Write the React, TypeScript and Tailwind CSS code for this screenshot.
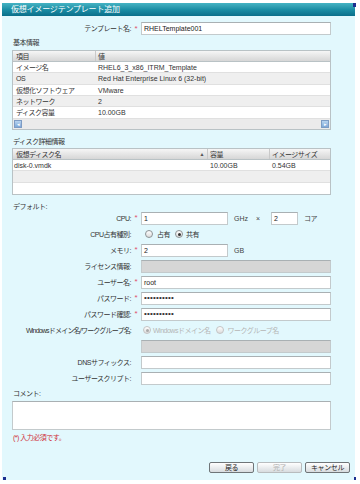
import React from "react";

const FONT = { fontFamily: '"Liberation Sans", "Noto Sans CJK JP", sans-serif' };

function Input({ value, w = "w-[190px]", disabled = false, pwd = false }: { value?: string; w?: string; disabled?: boolean; pwd?: boolean }) {
  return (
    <div
      className={`${w} h-[13px] border border-[#c3cacc] border-t-[#a9b0b3] ${disabled ? "bg-[#d6d6d6]" : "bg-white"} flex items-center pl-[2px] text-[7px] tracking-[0px] text-[#222] leading-none`}
    >
      {pwd ? <span className="text-[8px] tracking-[0.2px] text-[#333]">••••••••••</span> : value}
    </div>
  );
}

function Radio({ checked = false, disabled = false }: { checked?: boolean; disabled?: boolean }) {
  return (
    <span
      className={`w-[8px] h-[8px] rounded-full border ${disabled ? "border-[#c4c4c4]" : "border-[#8c9396]"} bg-gradient-to-b from-[#ffffff] to-[#dcdcdc] flex items-center justify-center`}
    >
      {checked && <span className={`w-[3px] h-[3px] rounded-full ${disabled ? "bg-[#aaa]" : "bg-[#333]"}`} />}
    </span>
  );
}

function Row({ label, req = false, tight = false, children }: { label: string; req?: boolean; tight?: boolean; children?: React.ReactNode }) {
  return (
    <div className="h-[16px] flex items-center">
      <div
        className={`w-[119px] text-right text-[7px] ${tight ? "tracking-[-0.8px]" : "tracking-[-0.5px]"} text-[#333] whitespace-nowrap leading-none`}
      >
        {label}:
      </div>
      <div className="w-[10px] flex justify-center text-[8px] text-[#e0506a] leading-none">{req ? "*" : ""}</div>
      {children}
    </div>
  );
}

function Btn({ label, disabled = false }: { label: string; disabled?: boolean }) {
  return (
    <div
      className={`w-[45px] h-[11px] rounded-[2px] border ${disabled ? "border-[#b8bcbe] text-[#b0b0b0]" : "border-[#6f7578] text-[#222]"} bg-gradient-to-b from-[#ffffff] to-[#d8dcdf] flex items-center justify-center text-[7px] tracking-[-0.4px] leading-none`}
    >
      {label}
    </div>
  );
}

const basic: [string, string][] = [
  ["イメージ名", "RHEL6_3_x86_ITRM_Template"],
  ["OS", "Red Hat Enterprise Linux 6 (32-bit)"],
  ["仮想化ソフトウェア", "VMware"],
  ["ネットワーク", "2"],
  ["ディスク容量", "10.00GB"],
];
const basicH = ["h-[11px]", "h-[12px]", "h-[11px]", "h-[11px]", "h-[12px]"];

export default function App() {
  return (
    <div className="w-[360px] h-[484px] bg-white overflow-hidden pt-[3px] pl-[2px]" style={FONT}>
      <div className="w-[353px] h-[477px] bg-[#e2f8fd] flex flex-col relative">
        {/* title */}
        <div className="h-[13px] bg-gradient-to-b from-[#45b3c3] via-[#1b8ea5] to-[#0b6f8a] flex items-center pl-[9px] text-[8px] tracking-[-0.2px] text-white leading-none relative">
          仮想イメージテンプレート追加
          <span className="absolute right-[-1px] top-0 w-[3px] h-[4px] bg-[#1c2f8f]" />
        </div>

        <div className="flex-1 pl-[10px] pr-[22px] flex flex-col">
          <div className="mt-[6px]">
            <div className="h-[13px] flex items-center">
              <div className="w-[119px] text-right text-[7px] tracking-[-0.5px] text-[#333] leading-none">テンプレート名:</div>
              <div className="w-[10px] flex justify-center text-[8px] text-[#e0506a] leading-none">*</div>
              <Input value="RHELTemplate001" />
            </div>
          </div>

          <div className="h-[15px] flex items-center text-[7px] tracking-[-0.5px] text-[#333] leading-none pl-[1px]">基本情報</div>

          {/* basic table */}
          <div className="w-[319px] border border-[#b9c2c5] bg-white text-[7px] text-[#333] leading-none">
            <div className="h-[11px] flex bg-gradient-to-b from-[#f6f6f6] to-[#d6d6d6] border-b border-[#b9c2c5] tracking-[-0.5px]">
              <div className="w-[83px] pl-[3px] flex items-center border-r border-[#c9c9c9]">項目</div>
              <div className="flex-1 pl-[2px] flex items-center">値</div>
            </div>
            {basic.map(([k, v], i) => (
              <div key={k} className={`${basicH[i]} flex border-b border-[#e0e0e0] ${i % 2 === 1 ? "bg-[#efefef]" : "bg-white"}`}>
                <div className="w-[83px] pl-[3px] flex items-center tracking-[-0.5px]">{k}</div>
                <div className="flex-1 pl-[2px] flex items-center tracking-[0px]">{v}</div>
              </div>
            ))}
            <div className="h-[10px] flex items-center bg-[#ebebeb]">
              <div className="w-[8px] h-[8px] ml-[1px] bg-gradient-to-b from-[#b8d4f0] to-[#7fa8d8] border border-[#7d9cc4] flex items-center justify-center text-[5px] text-white">◂</div>
              <div className="flex-1" />
              <div className="w-[8px] h-[8px] mr-[1px] bg-gradient-to-b from-[#b8d4f0] to-[#7fa8d8] border border-[#7d9cc4] flex items-center justify-center text-[5px] text-white">▸</div>
            </div>
          </div>

          <div className="h-[18px] pt-[4px] flex items-center text-[7px] tracking-[-0.5px] text-[#333] leading-none pl-[1px]">ディスク詳細情報</div>

          {/* disk table */}
          <div className="w-[319px] border border-[#b9c2c5] bg-white text-[7px] text-[#333] leading-none">
            <div className="h-[11px] flex bg-gradient-to-b from-[#f6f6f6] to-[#d6d6d6] border-b border-[#b9c2c5] tracking-[-0.5px]">
              <div className="w-[195px] pl-[3px] pr-[3px] flex items-center justify-between border-r border-[#c9c9c9]">
                <span>仮想ディスク名</span>
                <span className="text-[5px] text-[#555]">▲</span>
              </div>
              <div className="w-[62px] pl-[2px] flex items-center border-r border-[#c9c9c9]">容量</div>
              <div className="flex-1 pl-[2px] flex items-center">イメージサイズ</div>
            </div>
            <div className="h-[11px] flex border-b border-[#e0e0e0] bg-white">
              <div className="w-[195px] pl-[1px] flex items-center">disk-0.vmdk</div>
              <div className="w-[62px] pl-[2px] flex items-center">10.00GB</div>
              <div className="flex-1 pl-[2px] flex items-center">0.54GB</div>
            </div>
            <div className="h-[12px] border-b border-[#e0e0e0] bg-[#efefef]" />
            <div className="h-[11px] bg-white" />
          </div>

          <div className="h-[15px] pt-[7px] flex items-center text-[7px] tracking-[-0.5px] text-[#333] leading-none pl-[1px]">デフォルト:</div>

          {/* form rows */}
          <div className="flex flex-col">
            <Row label="CPU" req>
              <Input value="1" w="w-[87px]" />
              <span className="ml-[6px] text-[7px] text-[#444] leading-none">GHz</span>
              <span className="ml-[8px] text-[7px] text-[#444] leading-none">×</span>
              <div className="ml-[11px]">
                <Input value="2" w="w-[27px]" />
              </div>
              <span className="ml-[6px] text-[7px] tracking-[-0.5px] text-[#444] leading-none">コア</span>
            </Row>
            <Row label="CPU占有種別">
              <div className="flex items-center text-[7px] tracking-[-0.5px] text-[#333] leading-none">
                <span className="ml-[4px]"><Radio /></span>
                <span className="ml-[4px]">占有</span>
                <span className="ml-[5px]"><Radio checked /></span>
                <span className="ml-[3px]">共有</span>
              </div>
            </Row>
            <Row label="メモリ" req>
              <Input value="2" w="w-[87px]" />
              <span className="ml-[6px] text-[7px] text-[#444] leading-none">GB</span>
            </Row>
            <Row label="ライセンス情報">
              <Input disabled />
            </Row>
            <Row label="ユーザー名" req>
              <Input value="root" />
            </Row>
            <Row label="パスワード" req>
              <Input pwd />
            </Row>
            <Row label="パスワード確認" req>
              <Input pwd />
            </Row>
            <Row label="Windowsドメイン名/ワークグループ名" tight>
              <div className="flex items-center text-[7px] tracking-[-0.5px] text-[#b5b5b5] leading-none">
                <span className="ml-[2px]"><Radio checked disabled /></span>
                <span className="ml-[2px]">Windowsドメイン名</span>
                <span className="ml-[6px]"><Radio disabled /></span>
                <span className="ml-[3px]">ワークグループ名</span>
              </div>
            </Row>
            <div className="h-[16px] flex items-center pl-[129px]">
              <Input disabled />
            </div>
            <Row label="DNSサフィックス">
              <Input />
            </Row>
            <Row label="ユーザースクリプト">
              <Input />
            </Row>
          </div>

          <div className="h-[14px] flex items-center text-[7px] tracking-[-0.5px] text-[#333] leading-none pl-[1px]">コメント:</div>
          <div className="mt-[1px] w-[319px] h-[29px] bg-white border border-[#c3cacc] border-t-[#a9b0b3]" />
          <div className="h-[14px] flex items-center text-[7px] tracking-[-0.5px] text-[#d0303a] leading-none pl-[1px]">(*) 入力必須です。</div>
        </div>

        <div className="flex justify-end gap-[3px] pr-[5px] mb-[7px]">
          <Btn label="戻る" />
          <Btn label="完了" disabled />
          <Btn label="キャンセル" />
        </div>
        <span className="absolute left-[1px] bottom-0 w-[3px] h-[3px] bg-[#1c2f8f]" />
        <span className="absolute right-[-1px] bottom-0 w-[2px] h-[3px] bg-[#1c2f8f]" />
      </div>
    </div>
  );
}
